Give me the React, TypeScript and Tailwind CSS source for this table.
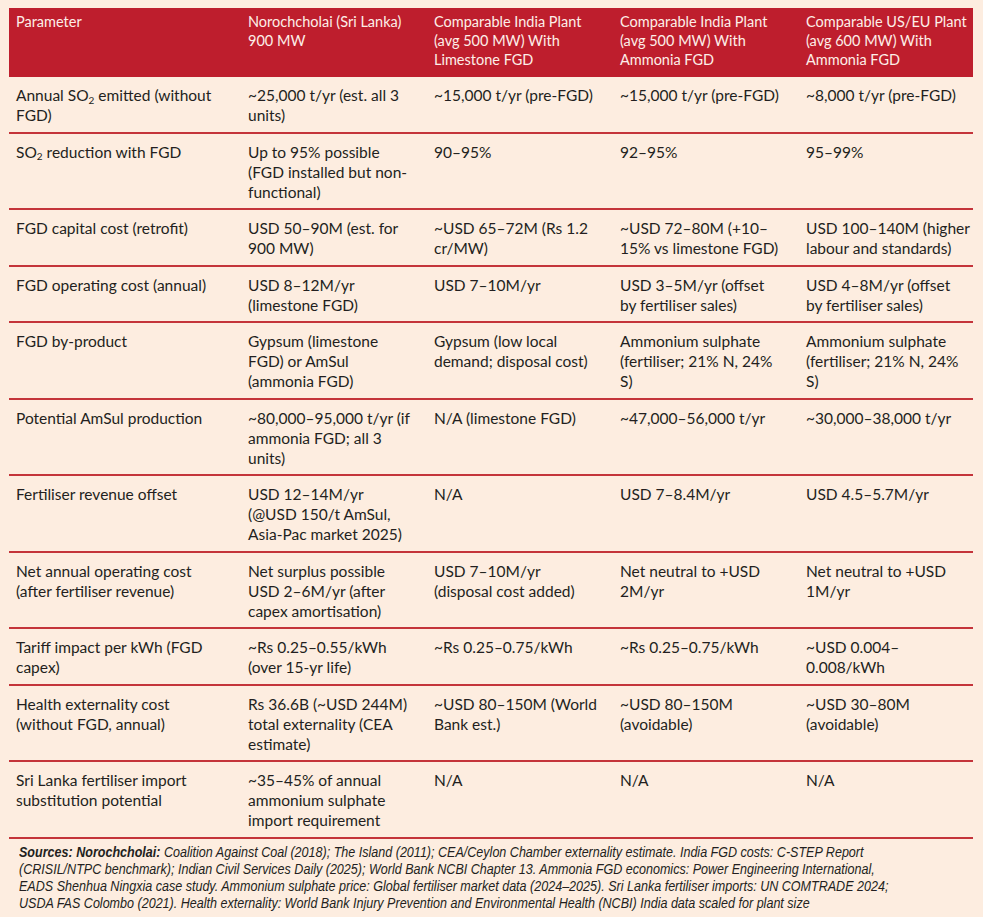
import React from "react";

type Cell = React.ReactNode[];

const SO2 = (
  <>
    SO<sub className="text-[10px]">2</sub>
  </>
);

const header: string[][] = [
  ["Parameter"],
  ["Norochcholai (Sri Lanka)", "900 MW"],
  ["Comparable India Plant", "(avg 500 MW) With", "Limestone FGD"],
  ["Comparable India Plant", "(avg 500 MW) With", "Ammonia FGD"],
  ["Comparable US/EU Plant", "(avg 600 MW) With", "Ammonia FGD"],
];

const rows: Cell[][] = [
  [
    [<>Annual {SO2} emitted (without</>, "FGD)"],
    ["~25,000 t/yr (est. all 3", "units)"],
    ["~15,000 t/yr (pre-FGD)"],
    ["~15,000 t/yr (pre-FGD)"],
    ["~8,000 t/yr (pre-FGD)"],
  ],
  [
    [<>{SO2} reduction with FGD</>],
    ["Up to 95% possible", "(FGD installed but non-", "functional)"],
    ["90–95%"],
    ["92–95%"],
    ["95–99%"],
  ],
  [
    ["FGD capital cost (retrofit)"],
    ["USD 50–90M (est. for", "900 MW)"],
    ["~USD 65–72M (Rs 1.2", "cr/MW)"],
    ["~USD 72–80M (+10–", "15% vs limestone FGD)"],
    ["USD 100–140M (higher", "labour and standards)"],
  ],
  [
    ["FGD operating cost (annual)"],
    ["USD 8–12M/yr", "(limestone FGD)"],
    ["USD 7–10M/yr"],
    ["USD 3–5M/yr (offset", "by fertiliser sales)"],
    ["USD 4–8M/yr (offset", "by fertiliser sales)"],
  ],
  [
    ["FGD by-product"],
    ["Gypsum (limestone", "FGD) or AmSul", "(ammonia FGD)"],
    ["Gypsum (low local", "demand; disposal cost)"],
    ["Ammonium sulphate", "(fertiliser; 21% N, 24%", "S)"],
    ["Ammonium sulphate", "(fertiliser; 21% N, 24%", "S)"],
  ],
  [
    ["Potential AmSul production"],
    ["~80,000–95,000 t/yr (if", "ammonia FGD; all 3", "units)"],
    ["N/A (limestone FGD)"],
    ["~47,000–56,000 t/yr"],
    ["~30,000–38,000 t/yr"],
  ],
  [
    ["Fertiliser revenue offset"],
    ["USD 12–14M/yr", "(@USD 150/t AmSul,", "Asia-Pac market 2025)"],
    ["N/A"],
    ["USD 7–8.4M/yr"],
    ["USD 4.5–5.7M/yr"],
  ],
  [
    ["Net annual operating cost", "(after fertiliser revenue)"],
    ["Net surplus possible", "USD 2–6M/yr (after", "capex amortisation)"],
    ["USD 7–10M/yr", "(disposal cost added)"],
    ["Net neutral to +USD", "2M/yr"],
    ["Net neutral to +USD", "1M/yr"],
  ],
  [
    ["Tariff impact per kWh (FGD", "capex)"],
    ["~Rs 0.25–0.55/kWh", "(over 15-yr life)"],
    ["~Rs 0.25–0.75/kWh"],
    ["~Rs 0.25–0.75/kWh"],
    ["~USD 0.004–", "0.008/kWh"],
  ],
  [
    ["Health externality cost", "(without FGD, annual)"],
    ["Rs 36.6B (~USD 244M)", "total externality (CEA", "estimate)"],
    ["~USD 80–150M (World", "Bank est.)"],
    ["~USD 80–150M", "(avoidable)"],
    ["~USD 30–80M", "(avoidable)"],
  ],
  [
    ["Sri Lanka fertiliser import", "substitution potential"],
    ["~35–45% of annual", "ammonium sulphate", "import requirement"],
    ["N/A"],
    ["N/A"],
    ["N/A"],
  ],
];

function Lines({ lines }: { lines: React.ReactNode[] }) {
  return (
    <>
      {lines.map((l, i) => (
        <React.Fragment key={i}>
          {i > 0 && <br />}
          {l}
        </React.Fragment>
      ))}
    </>
  );
}

const cols = "grid grid-cols-[232px_186px_186px_186px_174px]";

export default function App() {
  return (
    <div className="w-[1000px] h-[917px] bg-white">
      <div
        className="w-[983px] h-[917px] bg-[#fdede0] pl-[9px] pt-[8px]"
        style={{ fontFamily: "Lato, 'Open Sans', sans-serif" }}
      >
        <div className="w-[964px]">
          <div className={`${cols} bg-[#be1e2d] text-[#fdeee8] text-[14.5px] leading-[19px] pt-[4px] pb-[8px]`}>
            {header.map((h, i) => (
              <div key={i} className="pl-[7px] whitespace-nowrap">
                <Lines lines={h} />
              </div>
            ))}
          </div>
          {rows.map((r, ri) => (
            <div
              key={ri}
              className={`${cols} border-b-2 border-[#c4343a] text-[#231f20] text-[15.5px] leading-[20px] pt-[8px] pb-[6.5px]`}
            >
              {r.map((c, ci) => (
                <div key={ci} className="pl-[7px] whitespace-nowrap">
                  <Lines lines={c} />
                </div>
              ))}
            </div>
          ))}
          <div className="pl-[10px] pt-[5px]">
            <div
              className="origin-left scale-x-[0.896] text-[14px] leading-[17px] italic text-[#231f20] whitespace-nowrap"
              style={{ fontFamily: "'Liberation Sans', Arial, sans-serif" }}
            >
              <b>Sources: Norochcholai:</b> Coalition Against Coal (2018); The Island (2011); CEA/Ceylon Chamber externality estimate. India FGD costs: C-STEP Report
              <br />
              (CRISIL/NTPC benchmark); Indian Civil Services Daily (2025); World Bank NCBI Chapter 13. Ammonia FGD economics: Power Engineering International,
              <br />
              EADS Shenhua Ningxia case study. Ammonium sulphate price: Global fertiliser market data (2024–2025). Sri Lanka fertiliser imports: UN COMTRADE 2024;
              <br />
              USDA FAS Colombo (2021). Health externality: World Bank Injury Prevention and Environmental Health (NCBI) India data scaled for plant size
            </div>
          </div>
        </div>
      </div>
    </div>
  );
}
